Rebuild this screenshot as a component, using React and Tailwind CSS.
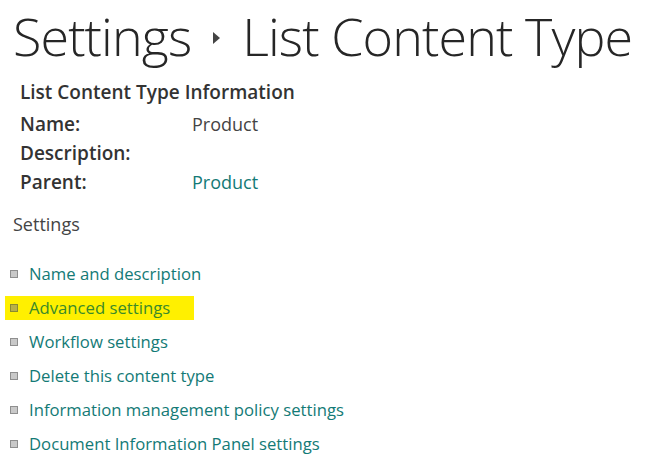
const links = [
  'Name and description',
  'Advanced settings',
  'Workflow settings',
  'Delete this content type',
  'Information management policy settings',
  'Document Information Panel settings',
];

const Bullet = ({ active }) => (
  <span
    className={`inline-block h-[8px] w-[8px] shrink-0 border ${
      active ? 'border-[#8a8a30] bg-[#b8b048]' : 'border-[#8f8f8f] bg-[#c9c9c9]'
    }`}
  />
);

export default function App() {
  return (
    <div className="h-[465px] w-[655px] overflow-hidden bg-white font-['Open_Sans',sans-serif] text-[#333]">
      <h1 className="flex items-center whitespace-nowrap pl-[13px] text-[52px] font-light leading-[72px] tracking-[-0.9px] text-[#262626]">
        <span>Settings</span>
        <span className="mx-[22px] mt-[4px] h-0 w-0 border-y-[6px] border-l-[7px] border-y-transparent border-l-[#444]" />
        <span>List Content Type</span>
      </h1>

      <div className="pl-[20px] pt-[7px]">
        <h2 className="text-[19px] font-semibold leading-[26px] text-[#333]">List Content Type Information</h2>
        <div className="mt-[5px] grid grid-cols-[172px_1fr] text-[18px] leading-[29px]">
          <span className="text-[19px] font-semibold">Name:</span>
          <span className="text-[#444]">Product</span>
          <span className="text-[19px] font-semibold">Description:</span>
          <span />
          <span className="text-[19px] font-semibold">Parent:</span>
          <span className="text-[#137a76]">Product</span>
        </div>
      </div>

      <div className="pl-[13px] pt-[14px] text-[18px] leading-[26px] text-[#444]">Settings</div>

      <ul className="mt-[20px] flex flex-col text-[16.7px] leading-[24px]">
        {links.map((label) => {
          const active = label === 'Advanced settings';
          return (
            <li key={label} className="flex h-[34px] items-center pl-[5px]">
              <span
                className={`flex h-[24px] items-center gap-[11px] pl-[5px] pr-[24px] ${
                  active ? 'bg-[#fff000] text-[#3a8a2a]' : 'text-[#137a76]'
                }`}
              >
                <Bullet active={active} />
                <span>{label}</span>
              </span>
            </li>
          );
        })}
      </ul>
    </div>
  );
}
